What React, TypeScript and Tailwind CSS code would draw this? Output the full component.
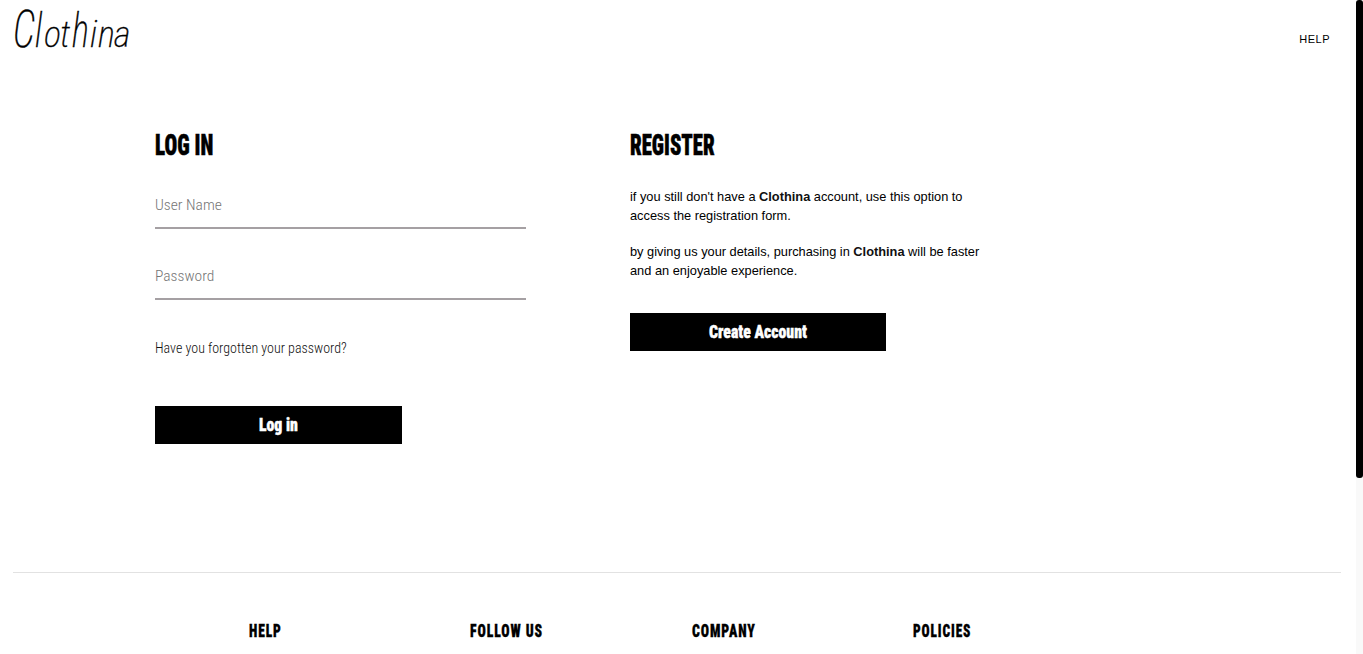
import { useLayoutEffect, useRef, useState } from 'react'

type SqueezeProps = {
  children: string
  width: number
  className?: string
}

// Narrow display lettering, squeezed horizontally to a fixed width
function Squeeze({ children, width, className = '' }: SqueezeProps) {
  const ref = useRef<HTMLSpanElement>(null)
  const [scale, setScale] = useState(1)

  useLayoutEffect(() => {
    if (ref.current) {
      setScale(width / ref.current.offsetWidth)
    }
  }, [width])

  return (
    <span className="inline-block whitespace-nowrap" style={{ width }}>
      <span
        ref={ref}
        className={`inline-block origin-left font-['Roboto',sans-serif] [font-stretch:75%] ${className}`}
        style={{ transform: `scaleX(${scale})` }}
      >
        {children}
      </span>
    </span>
  )
}

const footerColumns = [
  { title: 'HELP', width: 33 },
  { title: 'FOLLOW US', width: 73 },
  { title: 'COMPANY', width: 64 },
  { title: 'POLICIES', width: 58 },
]

// Tall ascenders over a low x-height give the wordmark its handwritten look
function Logo() {
  return (
    <a href="#" className="flex h-[70px] items-baseline pl-[13px] pt-[12px] font-['Roboto',sans-serif] text-[36px] font-extralight italic leading-[44px] [-webkit-text-stroke:0.3px_black] [font-stretch:75%]">
      <span className="w-[22px] origin-[0_81%] scale-y-[1.3] text-[40px]">C</span>
      <span className="w-[9px] origin-[0_78%] scale-y-[1.33]">l</span>
      <span className="w-[16px]">o</span>
      <span className="w-[12px]">t</span>
      <span className="w-[18px] origin-[0_78%] scale-y-[1.33]">h</span>
      <span className="w-[8px]">i</span>
      <span className="w-[16px]">n</span>
      <span>a</span>
    </a>
  )
}

export default function App() {
  const inputClass =
    "block h-[48px] w-full border-b-2 border-[#a5a0a3] bg-transparent p-0 pt-[2px] font-['Roboto',sans-serif] text-[15.5px] font-light [font-stretch:75%] outline-none placeholder:text-[#757575]"

  return (
    <div className="flex h-[654px] overflow-hidden bg-white font-['Liberation_Sans',Arial,sans-serif] text-black">
      <div className="flex min-w-0 flex-1 flex-col">
        {/* Header */}
        <header className="flex h-[78px] items-start justify-between pr-[26px]">
          <Logo />
          <a href="#" className="mt-[31px] text-[11px] leading-4 tracking-[0.5px]">HELP</a>
        </header>

        {/* Login and register */}
        <main className="flex h-[494px] pl-[155px]">
          <form className="mr-[104px] w-[371px]">
            <h2 className="mt-[47px] h-[40px] text-[29.5px] font-black leading-[40px]">
              <Squeeze width={58} className="[-webkit-text-stroke:0.5px_black]">LOG IN</Squeeze>
            </h2>
            <input type="text" placeholder="User Name" className={`${inputClass} mt-[16px]`} />
            <input type="password" placeholder="Password" className={`${inputClass} mt-[23px]`} />
            <a href="#" className="mt-[37px] block h-5 text-[14px] font-light leading-[22px] text-[#111]">
              <Squeeze width={192}>Have you forgotten your password?</Squeeze>
            </a>
            <button type="button" className="mt-[49px] block h-[38px] w-[247px] bg-black text-[19px] font-black leading-[38px] text-white">
              <Squeeze width={39} className="[-webkit-text-stroke:0.4px_white]">Log in</Squeeze>
            </button>
          </form>

          <section className="w-[371px]">
            <h2 className="mt-[47px] h-[40px] text-[29.5px] font-black leading-[40px]">
              <Squeeze width={85} className="[-webkit-text-stroke:0.5px_black]">REGISTER</Squeeze>
            </h2>
            <div className="mt-[22px] text-[12.8px] leading-[19.2px]">
              <p>
                if you still don't have a <strong className="text-[#111]">Clothina</strong> account, use this option to
                <br />
                access the registration form.
              </p>
              <p className="mt-[16.8px]">
                by giving us your details, purchasing in <strong className="text-[#111]">Clothina</strong> will be faster
                <br />
                and an enjoyable experience.
              </p>
            </div>
            <button type="button" className="mt-[32px] block h-[38px] w-[256px] bg-black text-[19px] font-black leading-[38px] text-white">
              <Squeeze width={98} className="[-webkit-text-stroke:0.4px_white]">Create Account</Squeeze>
            </button>
          </section>
        </main>

        {/* Footer */}
        <footer className="ml-[13px] mr-[15px] border-t border-[#e2e2e2] pl-[236px] pt-[47px]">
          <div className="grid grid-cols-[repeat(4,221.3px)]">
            {footerColumns.map((column) => (
              <h3 key={column.title} className="h-[22px] text-[18.5px] font-black leading-[22px]">
                <Squeeze width={column.width} className="tracking-[1.2px] [-webkit-text-stroke:0.3px_black]">{column.title}</Squeeze>
              </h3>
            ))}
          </div>
        </footer>
      </div>

      {/* Scrollbar */}
      <div className="w-[7px] bg-[#f9f9f9]">
        <div className="h-[478px] rounded-[3px] bg-black" />
      </div>
    </div>
  )
}
